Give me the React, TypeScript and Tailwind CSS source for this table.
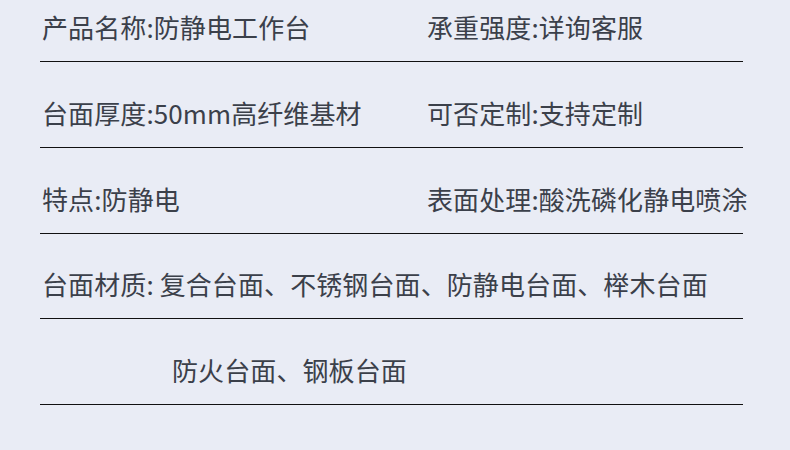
import React from 'react';

// 参数表：每行两列，底部一条黑线
const rows: { left: string; right?: string; indent?: boolean }[] = [
    { left: '产品名称:防静电工作台', right: '承重强度:详询客服' },
    { left: '台面厚度:50mm高纤维基材', right: '可否定制:支持定制' },
    { left: '特点:防静电', right: '表面处理:酸洗磷化静电喷涂' },
    { left: '台面材质: 复合台面、不锈钢台面、防静电台面、榉木台面' },
    { left: '防火台面、钢板台面', indent: true },
];

function App() {
    return (
        <div
            className="w-[790px] h-[450px] bg-[#e9ecf5] text-[#3b404a] overflow-hidden"
            style={{ fontFamily: '"Noto Sans CJK SC", "Noto Sans", sans-serif' }}>
            <div className="mx-[40px] w-[703px]">
                {rows.map((row, i) => (
                    <div
                        key={i}
                        className={
                            'flex items-end pb-[21px] border-b border-[#111] ' +
                            (i === 0 ? 'h-[62px]' : 'h-[85.75px]')
                        }>
                        <div
                            className={
                                'grid grid-cols-[385px_1fr] w-full text-[26px] leading-[26px] whitespace-nowrap tracking-[0.1px] ' +
                                (row.indent ? 'pl-[132px]' : 'pl-[2px]')
                            }>
                            <span>{row.left}</span>
                            {row.right && <span>{row.right}</span>}
                        </div>
                    </div>
                ))}
            </div>
        </div>
    );
}

export default App;
